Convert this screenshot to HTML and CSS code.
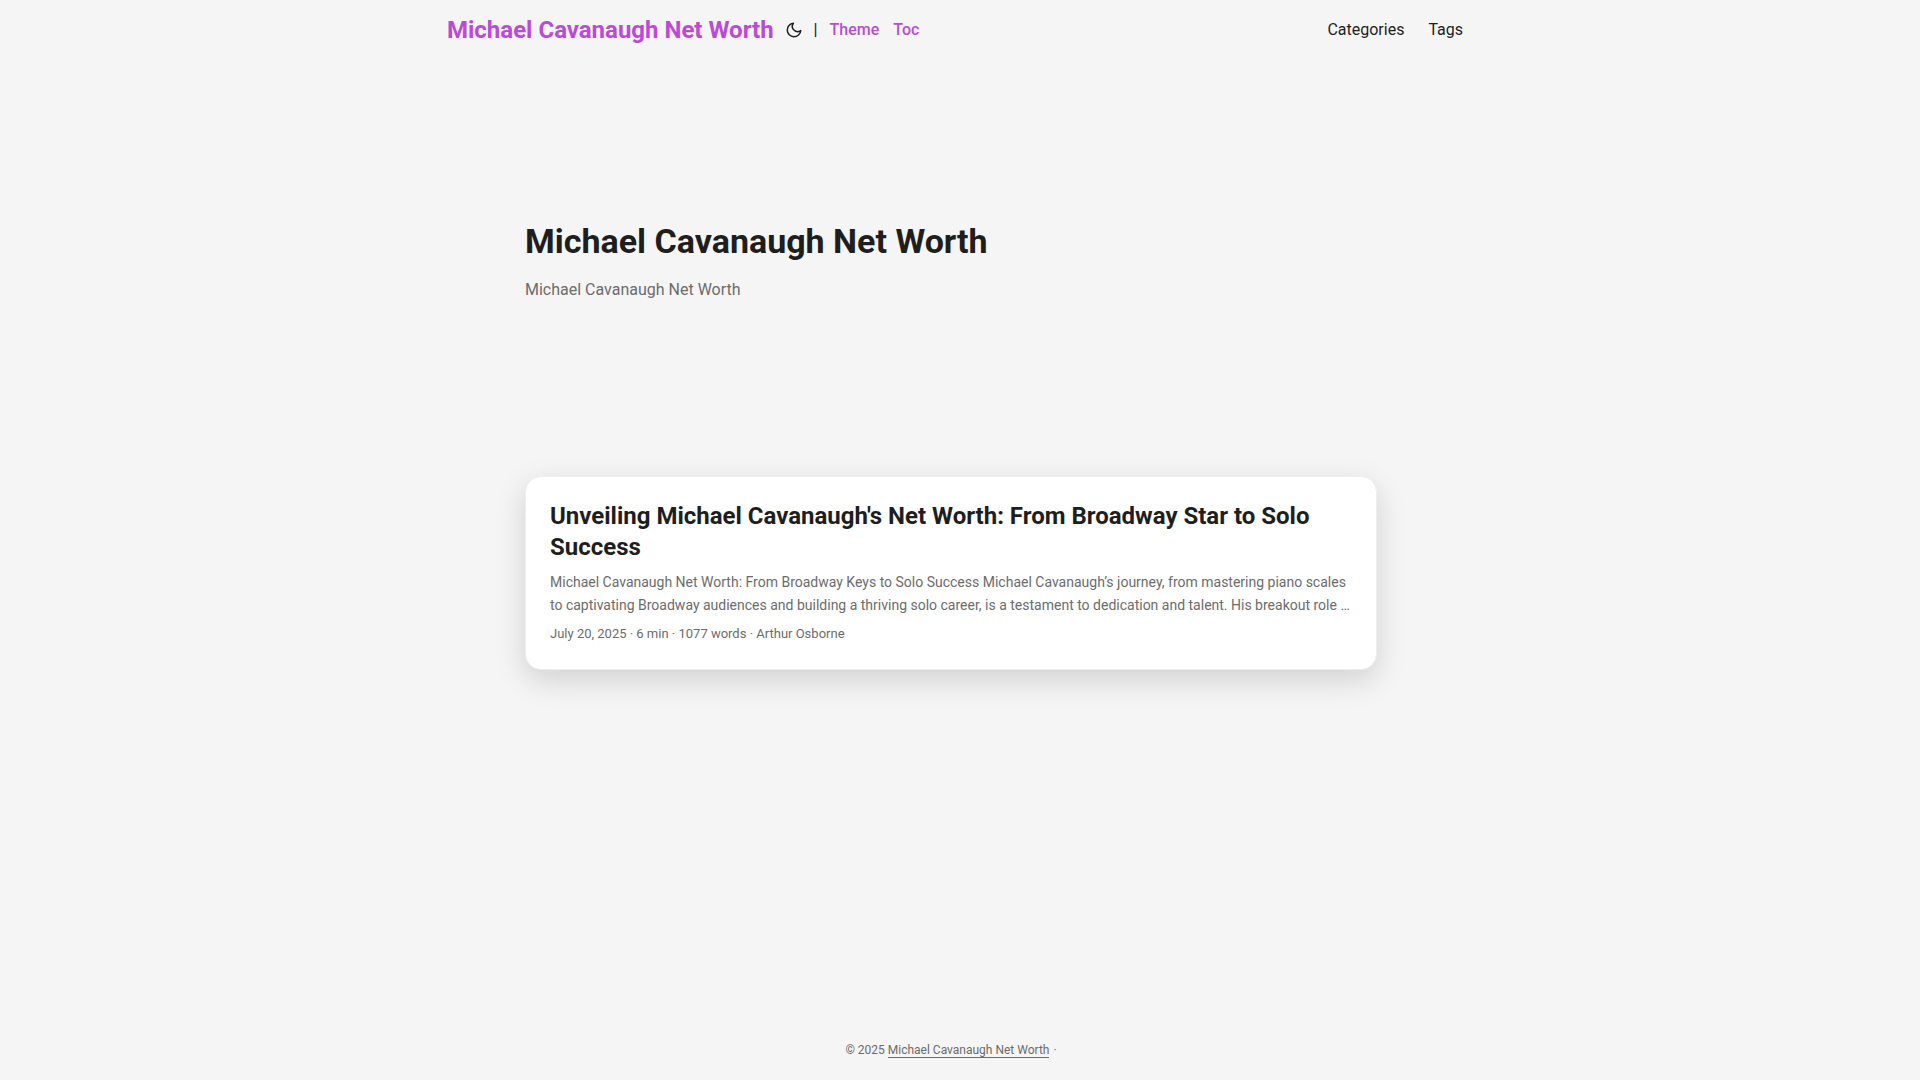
FILE: index.html
```html
<!DOCTYPE html>
<html lang="en">
<head>
<meta charset="UTF-8">
<meta name="viewport" content="width=device-width, initial-scale=1">
<title>Michael Cavanaugh Net Worth</title>
<link rel="stylesheet" href="styles.css">
</head>
<body>
<header class="header">
<nav class="nav">
<div class="logo">
<a class="logo-link" href="#">Michael Cavanaugh Net Worth</a>
<button id="theme-toggle" class="theme-toggle" type="button" aria-label="Toggle theme">
<svg width="24" height="18" viewBox="0 0 24 24" fill="none" stroke="currentColor" stroke-width="2" stroke-linecap="round" stroke-linejoin="round">
<path d="M21 12.79A9 9 0 1 1 11.21 3 7 7 0 0 0 21 12.79z"></path>
</svg>
</button>
<span class="separator">|</span>
<ul class="switches">
<li><a href="#">Theme</a></li>
<li><a href="#">Toc</a></li>
</ul>
</div>
<ul class="menu">
<li><a href="#">Categories</a></li>
<li><a href="#">Tags</a></li>
</ul>
</nav>
</header>
<main class="main">
<section class="first-entry">
<h1>Michael Cavanaugh Net Worth</h1>
<p>Michael Cavanaugh Net Worth</p>
</section>
<article class="post-entry">
<h2><a href="#">Unveiling Michael Cavanaugh's Net Worth: From Broadway Star to Solo Success</a></h2>
<p class="entry-content">Michael Cavanaugh Net Worth: From Broadway Keys to Solo Success Michael Cavanaugh’s journey, from mastering piano scales to captivating Broadway audiences and building a thriving solo career, is a testament to dedication and talent. His breakout role …</p>
<div class="entry-footer">July 20, 2025 · 6 min · 1077 words · Arthur Osborne</div>
</article>
</main>
<footer class="footer">
<span>© 2025 <a href="#">Michael Cavanaugh Net Worth</a></span>
<span>·</span>
</footer>
</body>
</html>
```

FILE: styles.css
```css
:root {
--gap: 24px;
--theme: #f5f5f5;
--entry: #fff;
--primary: #1e1e1e;
--secondary: #6c6c6c;
--accent: #bb4bd4;
--border: #eee;
}

* {
box-sizing: border-box;
margin: 0;
padding: 0;
}

body {
display: flex;
flex-direction: column;
min-height: 100vh;
padding-right: 18px;
background: var(--theme);
color: var(--primary);
font-family: Roboto, sans-serif;
font-size: 16px;
line-height: 26px;
}

a {
color: inherit;
text-decoration: none;
}

ul {
list-style: none;
}

/* Header */
.nav {
display: flex;
justify-content: space-between;
align-items: center;
max-width: 1072px;
height: 60px;
margin: 0 auto;
padding: 0 var(--gap);
}

.logo {
display: flex;
align-items: center;
padding-left: 8px;
color: var(--accent);
}

.logo-link {
font-size: 24px;
font-weight: 700;
}

.theme-toggle {
display: flex;
margin: 0 8px;
border: none;
background: none;
color: var(--primary);
cursor: pointer;
}

.separator {
color: var(--primary);
font-weight: 500;
}

.switches {
display: flex;
gap: 14px;
margin-left: 12px;
font-weight: 500;
}

.menu {
display: flex;
gap: var(--gap);
}

/* Content */
.main {
flex: 1;
width: 100%;
max-width: 900px;
margin: 0 auto;
padding: var(--gap);
}

.first-entry {
display: flex;
flex-direction: column;
justify-content: center;
min-height: 320px;
margin: var(--gap) 0 calc(var(--gap) * 2);
}

.first-entry h1 {
font-size: 34px;
line-height: 44px;
}

.first-entry p {
margin: 14px 0;
color: var(--secondary);
}

.post-entry {
padding: var(--gap);
border: 1px solid var(--border);
border-radius: 16px;
background: var(--entry);
box-shadow: 0 10px 30px rgba(0, 0, 0, 0.15);
}

.post-entry h2 {
font-size: 24px;
line-height: 31px;
}

.entry-content {
margin: 8px 0 6px;
color: var(--secondary);
font-size: 14px;
line-height: 23px;
}

.entry-footer {
color: var(--secondary);
font-size: 13px;
line-height: 22px;
}

/* Footer */
.footer {
display: flex;
justify-content: center;
gap: 4px;
padding: 18px var(--gap);
color: var(--secondary);
font-size: 12px;
line-height: 24px;
}

.footer a {
border-bottom: 1px solid var(--secondary);
}
```
